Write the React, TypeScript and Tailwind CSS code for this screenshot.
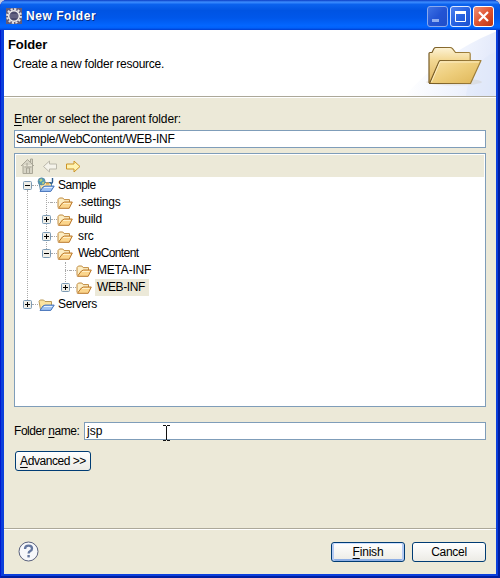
import React from "react";

const ui = "font-['Liberation_Sans','Noto_Sans_CJK_JP',sans-serif]";

function SmallFolder() {
  return (
    <svg width="16" height="14" viewBox="0 0 16 14" className="shrink-0" fill="none">
      <path d="M1 11.5V3.6L2.4 2h3.4L7.2 3.6h5.3V7" fill="#fdeec4" stroke="#c08a3e" strokeLinejoin="round" />
      <path d="M1.4 12.3 5.4 7l2-1h7.9l-3.1 6.3z" fill="#fbd58c" stroke="#b9772a" strokeLinejoin="round" />
      <path d="M6 7.5h7.6" stroke="#fff0c8" />
    </svg>
  );
}

function ProjectFolder({ web }: { web?: boolean }) {
  return (
    <svg width="17" height="16" viewBox="0 0 17 16" className="shrink-0 overflow-visible" fill="none">
      <path d="M2.5 12.5 1 4.2 2.2 3h3.4L7 4.5h6.5v4" fill="#fbe3a0" stroke={web ? "#5b87a8" : "#b99a58"} strokeLinejoin="round" />
      <path d="M2 13.4 5 9l2-.9h9.2l-3.4 5.3z" fill="#9fc3f4" stroke="#4270b8" strokeLinejoin="round" />
      <path d="M6 9.5h8.4" stroke="#e3f0ff" />
      {web && (
        <>
          <circle cx="3.6" cy="3.4" r="3.6" fill="#4e9bb4" stroke="#64829a" strokeWidth=".6" />
          <path d="M1.2 2.2 3.2.6l1.4 1.6-1.9 1.9zM4.3 4l2.2-.5-.7 2.2-1.6.9z" fill="#c0d47e" />
          <path d="M8 5.5h3" stroke="#e0a64a" strokeWidth="2" />
          <path d="M14.5 0v4q0 1.4-1.3 1.4-1.2 0-1.4-1.2" stroke="#315f91" strokeWidth="1.4" />
        </>
      )}
    </svg>
  );
}

function Expander({ open }: { open?: boolean }) {
  return (
    <svg width="9" height="9" viewBox="0 0 9 9" className="shrink-0">
      <rect x=".5" y=".5" width="8" height="8" rx="1" fill="#f0efe8" stroke="#7b9ab5" />
      <path d="M2 4h5v1H2z" fill="#000" />
      {!open && <path d="M4 2h1v5H4z" fill="#000" />}
    </svg>
  );
}

type Row = {
  label: string;
  lead: string;
  kind?: "project" | "server";
  box?: "open" | "closed";
  tracking: string;
  selected?: boolean;
};

const rows: Row[] = [
  { label: "Sample", lead: "pl-2", kind: "project", box: "open", tracking: "tracking-[-0.5px]" },
  { label: ".settings", lead: "pl-[27px]", tracking: "tracking-[-0.25px]" },
  { label: "build", lead: "pl-[27px]", box: "closed", tracking: "tracking-[-0.3px]" },
  { label: "src", lead: "pl-[27px]", box: "closed", tracking: "tracking-[-0.1px]" },
  { label: "WebContent", lead: "pl-[27px]", box: "open", tracking: "tracking-[-0.6px]" },
  { label: "META-INF", lead: "pl-[46px]", tracking: "tracking-[-0.2px]" },
  { label: "WEB-INF", lead: "pl-[46px]", box: "closed", tracking: "tracking-[-0.4px]", selected: true },
  { label: "Servers", lead: "pl-2", kind: "server", box: "closed", tracking: "tracking-[-0.35px]" },
];

function TreeRow({ row }: { row: Row }) {
  return (
    <div className={`flex h-[17px] items-center ${row.lead}`}>
      <div className="flex w-[9px] shrink-0">
        {row.box ? <Expander open={row.box === "open"} /> : <span className="ml-1 h-px w-[5px] border-t border-dotted border-[#a9a9a9]" />}
      </div>
      <span className="h-px w-[6px] shrink-0 border-t border-dotted border-[#a9a9a9]" />
      <div className="flex w-[17px] shrink-0 items-center">
        {row.kind ? <ProjectFolder web={row.kind === "project"} /> : <SmallFolder />}
      </div>
      <span
        className={`flex h-[17px] items-center whitespace-nowrap pl-[2px] ${row.tracking} ${row.kind ? "ml-px" : "ml-[2px]"} ${row.selected ? "w-[54px] bg-[#ece9d8]" : ""}`}
      >
        {row.label}
      </span>
    </div>
  );
}

function GearLogo() {
  return (
    <svg width="16" height="16" viewBox="0 0 16 16" className="shrink-0">
      <rect width="16" height="16" fill="#625b78" />
      <circle cx="8" cy="8" r="6.9" fill="none" stroke="#e6e4e4" strokeWidth="2" strokeDasharray="2.1 1.51" />
      <circle cx="8" cy="8" r="5.3" fill="#4b4a6d" stroke="#f1eeee" strokeWidth="1.5" />
      <path d="M4 7h8M4 9h8" stroke="#8583a0" strokeWidth=".8" />
    </svg>
  );
}

function BigFolder() {
  return (
    <svg width="100" height="66" viewBox="400 30 100 66" className="-mr-1 shrink-0" fill="none">
      <defs>
        <linearGradient id="sweep" gradientUnits="userSpaceOnUse" x1="410" y1="60" x2="496" y2="80">
          <stop offset="0" stopColor="#ffffff" />
          <stop offset=".6" stopColor="#eff3fd" />
          <stop offset="1" stopColor="#e0e7fa" />
        </linearGradient>
        <linearGradient id="back" x1="0" y1="0" x2="0" y2="1">
          <stop stopColor="#fdf3d6" />
          <stop offset=".35" stopColor="#f3d894" />
          <stop offset="1" stopColor="#dfb661" />
        </linearGradient>
        <linearGradient id="front" x1="0" y1="0" x2="1" y2="1">
          <stop stopColor="#f8e2a8" />
          <stop offset=".5" stopColor="#edcd7b" />
          <stop offset="1" stopColor="#deb556" />
        </linearGradient>
        <linearGradient id="edge" x1="0" y1="0" x2="1" y2="0">
          <stop stopColor="#765b26" />
          <stop offset="1" stopColor="#a3833e" />
        </linearGradient>
      </defs>
      <path d="M405 96Q442 53 500 30V96Z" fill="url(#sweep)" />
      <path d="M466 96Q470 61 500 50V96Z" fill="#dde5fa" opacity=".4" />
      <ellipse cx="454" cy="82" rx="28" ry="3.5" fill="#b9a98b" opacity=".2" />
      <path d="M429 83V53.5q0-1 1-1h2l2-4q.6-1 2-1h14q1.5 0 2.5 1.2l3 3.8h13.5q1.2 0 1.2 1.5V60.5" fill="url(#back)" stroke="url(#edge)" strokeWidth="1.2" />
      <path d="M429.5 83.5 439 61.5q.4-1 1.5-1H481L470.5 83.5Z" fill="url(#front)" stroke="url(#edge)" strokeWidth="1.2" strokeLinejoin="round" />
      <path d="M431.5 82 440 62H479" stroke="#fff3d1" strokeWidth=".8" />
    </svg>
  );
}

function TitleButton({ kind }: { kind: "min" | "max" | "close" }) {
  const color =
    kind === "close"
      ? "border-white from-[#ef8e74] via-[#e05431] to-[#bd3511]"
      : kind === "min"
        ? "border-[#8aa9ed] from-[#3e72e5] via-[#2354d4] to-[#1f4ec9]"
        : "border-[#dfe9ff] from-[#4d80ee] via-[#2862e2] to-[#1c50cf]";
  return (
    <div className={`h-[21px] w-[21px] rounded-[3px] border bg-linear-to-br ${color}`}>
      <svg width="19" height="19" viewBox="0 0 19 19" fill="none">
        {kind === "min" && <path d="M4 12h7v3H4z" fill="#8fadf0" />}
        {kind === "max" && (
          <>
            <path d="M4.5 5.5h10v9h-10z" stroke="#fff" />
            <path d="M4 4h11v3H4z" fill="#fff" />
          </>
        )}
        {kind === "close" && <path d="m5 5 9 9m0-9-9 9" stroke="#fff" strokeWidth="2.2" />}
      </svg>
    </div>
  );
}

export default function App() {
  return (
    <div className="bg-[#c6cbe0]">
      <div
        className={`${ui} flex h-[578px] w-[500px] flex-col overflow-hidden rounded-t-[7px] bg-[#0b3fdc] px-1 pb-1 text-[12px] leading-[17px] text-black shadow-[inset_1px_0_#0019cf,inset_-2px_0_#001ea0,inset_0_-2px_#001ea0]`}
      >
        <header className="-mx-1 flex h-[30px] shrink-0 items-center bg-[linear-gradient(180deg,#0a3cc4_0%,#3d8dff_7%,#0b62ee_15%,#0054e3_35%,#0057ea_60%,#0366ff_85%,#0161fa_93%,#003dd0_100%)] pl-[6px] pr-[6px] pt-[2px]">
          <GearLogo />
          <span className="ml-1 pt-px text-[12px] font-bold tracking-[0.55px] text-white [text-shadow:1px_1px_#0a2a80]">New Folder</span>
          <div className="ml-auto flex gap-[2px] pt-[1px]">
            <TitleButton kind="min" />
            <TitleButton kind="max" />
            <TitleButton kind="close" />
          </div>
        </header>

        <section className="flex h-[66px] shrink-0 justify-between overflow-hidden bg-white">
          <div className="pl-[4px] pt-[6px]">
            <h1 className="text-[13px] font-bold leading-[17px] tracking-[-0.1px]">Folder</h1>
            <p className="mt-[3px] pl-[5px] tracking-[-0.24px]">Create a new folder resource.</p>
          </div>
          <BigFolder />
        </section>

        <main className="flex h-[432px] shrink-0 flex-col border-t border-[#aca899] bg-[#ece9d8] px-[10px] shadow-[inset_0_1px_#fff]">
          <label className="mt-[14px] h-[17px] tracking-[-0.13px]">
            <u className="underline-offset-2">E</u>nter or select the parent folder:
          </label>
          <div className="mt-[2px] flex h-[18px] w-[472px] shrink-0 items-center border border-[#7f9db9] bg-white pl-[1px] tracking-[-0.24px]">
            Sample/WebContent/WEB-INF
          </div>
          <div className="mt-[5px] h-[254px] w-[472px] shrink-0 border border-[#7f9db9] bg-white px-px pt-px">
            <div className="flex h-[22px] items-center bg-[#ece9d8] pl-[4px]">
              <svg width="62" height="18" viewBox="20 157 62 18" fill="none">
                <path d="m21 166 6.5-6.5L34 166M23 165v8.5h9.5V165M30.5 162v-3h2v5" fill="#d7d4c5" stroke="#aaa798" />
                <path d="M26.5 173v-5h3v5M24.5 167h7M27 163v3" stroke="#aaa798" />
                <path d="m43.5 166.5 6-5.5v3h7v5h-7v3z" fill="#f5f3ea" stroke="#bbb8ab" strokeLinejoin="round" />
                <path d="m80 166.5-6-5.5v3h-7.5v5h7.5v3z" fill="#fff3b0" stroke="#cc9426" strokeLinejoin="round" />
              </svg>
            </div>
            <div className="relative">
              <div className="absolute left-[11px] top-[13px] h-[110px] border-l border-dotted border-[#a9a9a9]" />
              <div className="absolute left-[30px] top-[17px] h-[55px] border-l border-dotted border-[#a9a9a9]" />
              <div className="absolute left-[49px] top-[85px] h-[22px] border-l border-dotted border-[#a9a9a9]" />
              <div className="relative -ml-px">
                {rows.map((row) => (
                  <TreeRow key={row.label} row={row} />
                ))}
              </div>
            </div>
          </div>
          <div className="mt-[15px] flex h-[18px] w-[472px] shrink-0 items-center">
            <label className="w-[70px] whitespace-nowrap tracking-[-0.45px]">
              Folder <u className="underline-offset-2">n</u>ame:
            </label>
            <div className="flex h-[18px] flex-1 items-center border border-[#7f9db9] bg-white pl-[2px]">
              <span className="w-[76px]">jsp</span>
              <svg width="7" height="16" viewBox="0 0 7 16" className="mt-[4px]">
                <path d="M0 .5h3m1 0h3M3.5 1v14M0 15.5h3m1 0h3" stroke="#111" />
              </svg>
            </div>
          </div>
          <button className="ml-px mt-[11px] h-5 w-[76px] shrink-0 whitespace-nowrap rounded-[3px] border border-[#003c74] bg-linear-to-b from-white to-[#ecebe5] leading-[18px] tracking-[-0.45px]">
            <u className="underline-offset-2">A</u>dvanced &gt;&gt;
          </button>
        </main>

        <footer className="flex h-[46px] shrink-0 items-center border-t border-[#aca899] bg-[#ece9d8] pl-[14px] pr-[10px] shadow-[inset_0_1px_#fff]">
          <svg width="21" height="21" viewBox="0 0 21 21" fill="none">
            <circle cx="10.5" cy="10.5" r="9.5" fill="#f7f8fb" stroke="#59617e" />
            <path d="M7 8q.1-3.3 3.6-3.3 3.4 0 3.4 2.7 0 1.7-1.8 2.7-1.6.8-1.6 2.4" stroke="#64779f" strokeWidth="2.3" />
            <path d="M9.4 14h2.4v2.4H9.4z" fill="#64779f" />
          </svg>
          <div className="ml-auto flex gap-[7px]">
            <button className="h-5 w-[74px] rounded-[3px] border border-[#003c74] bg-linear-to-b from-white to-[#ecebe5] leading-[18px] tracking-[-0.2px] shadow-[inset_0_1px_#cee0ff,inset_2px_0_#b5cbf3,inset_-2px_0_#b5cbf3,inset_0_-2px_#8eafe5]">
              <u className="underline-offset-2">F</u>inish
            </button>
            <button className="h-5 w-[74px] rounded-[3px] border border-[#003c74] bg-linear-to-b from-white to-[#ecebe5] leading-[18px] tracking-[-0.3px]">Cancel</button>
          </div>
        </footer>
      </div>
    </div>
  );
}
